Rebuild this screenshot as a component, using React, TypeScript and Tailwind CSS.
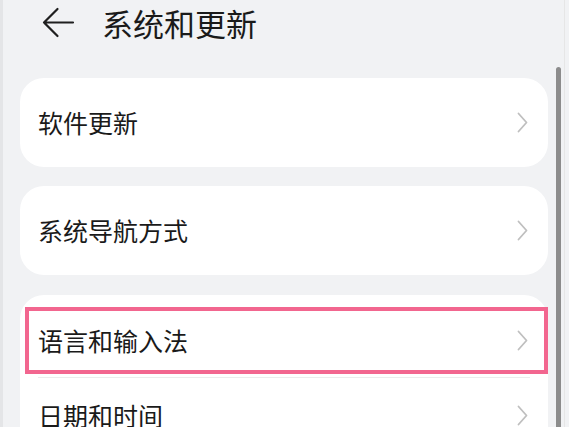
import React from 'react';

const Chevron: React.FC = () => (
  <svg width="11" height="21" viewBox="0 0 11 21" fill="none">
    <polyline points="1.5,1.5 9.5,10.5 1.5,19.5" stroke="#bfbfbf" strokeWidth="1.8" strokeLinecap="round" strokeLinejoin="round" />
  </svg>
);

const BackArrow: React.FC = () => (
  <svg width="33" height="31" viewBox="0 0 33 31" fill="none">
    <path d="M2 15.5H31M2 15.5L15.5 2M2 15.5L15.5 29" stroke="#1f1f1f" strokeWidth="2.2" strokeLinecap="round" strokeLinejoin="round" />
  </svg>
);

const Row: React.FC<{ label: string; height: string }> = ({ label, height }) => (
  <div className={`flex items-center justify-between pl-[18px] pr-[20px] ${height}`}>
    <span className="text-[25px] leading-none text-[#1a1a1a]">{label}</span>
    <Chevron />
  </div>
);

const App: React.FC = () => {
  return (
    <div
      className="relative h-[427px] w-[569px] overflow-hidden border-l-[3px] border-l-[#e4e5e7] bg-[#f1f2f4]"
      style={{ fontFamily: '"Noto Sans CJK SC", "Noto Sans", sans-serif' }}
    >
      <div className="pl-[17px] pr-[21px]">
        <header className="flex h-[44px] items-center">
          <div className="ml-[22px] flex items-center">
            <BackArrow />
          </div>
          <h1 className="ml-[27px] text-[31px] font-normal leading-none text-[#1a1a1a]">系统和更新</h1>
        </header>

        <div className="mt-[34px] rounded-[24px] bg-white">
          <Row label="软件更新" height="h-[89px]" />
        </div>

        <div className="mt-[19px] rounded-[24px] bg-white">
          <Row label="系统导航方式" height="h-[89px]" />
        </div>

        <div className="mt-[20px] rounded-t-[24px] bg-white pt-[8px]">
          <div className="relative">
            <Row label="语言和输入法" height="h-[74px]" />
            <div className="absolute left-[5px] top-[4px] h-[67px] w-[523px] border-4 border-[#f2668f]" />
          </div>
          <div className="mx-[18px] h-px bg-[#ececec]" />
          <Row label="日期和时间" height="h-[74px]" />
        </div>
      </div>

      <div className="absolute left-[553px] top-[67px] h-[370px] w-[5px] rounded-t-full bg-[#8c8c8c]" />
      <div className="absolute left-[561px] top-0 h-full w-px bg-[#e6e6e6]" />
    </div>
  );
};

export default App;
